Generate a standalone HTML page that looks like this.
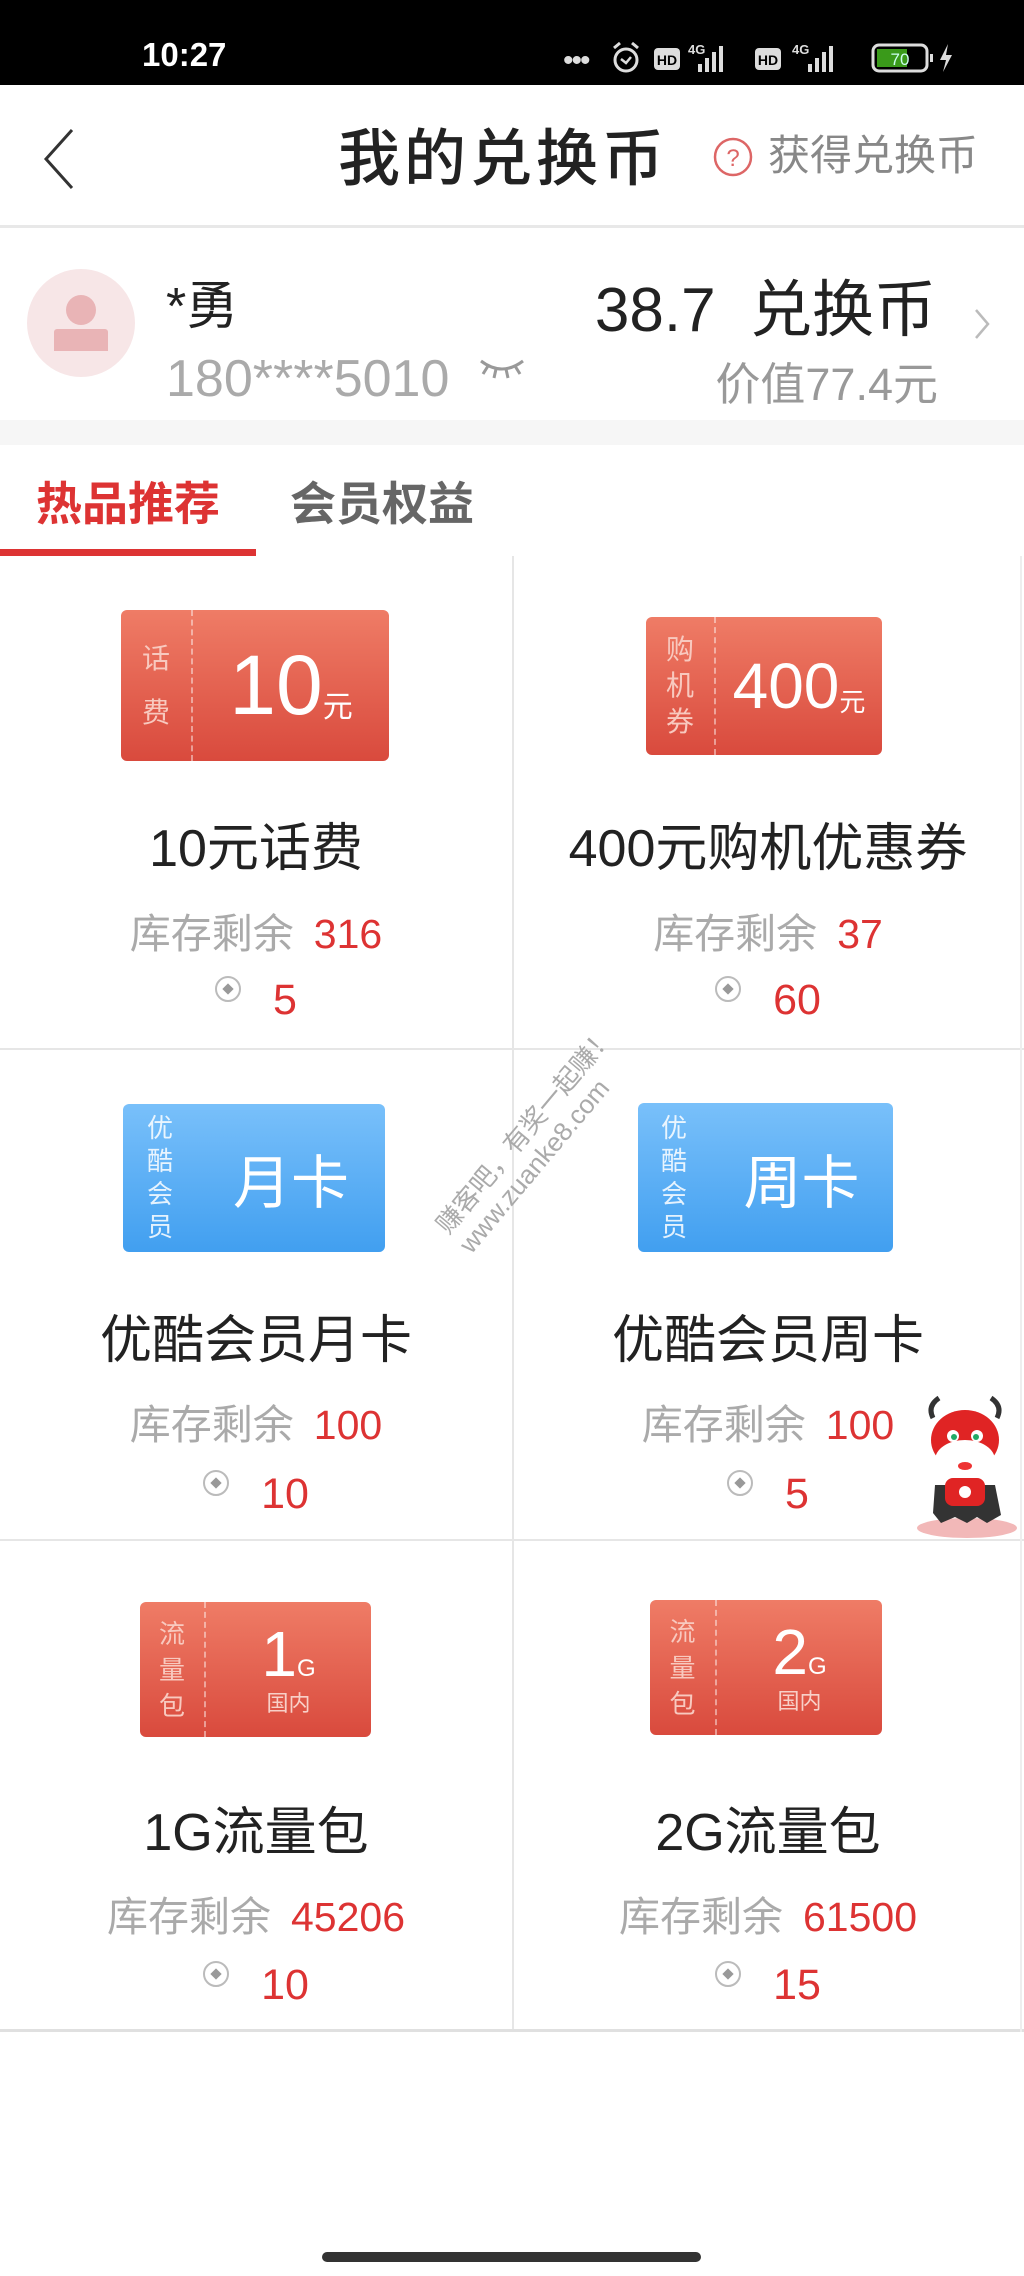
<!DOCTYPE html>
<html><head><meta charset="utf-8">
<style>
*{margin:0;padding:0;box-sizing:border-box}
body{width:1024px;height:2276px;background:#fff;position:relative;overflow:hidden;font-family:"Liberation Sans","Noto Sans CJK SC",sans-serif}
.a{position:absolute;white-space:nowrap}
.c{position:absolute;white-space:nowrap;text-align:center;width:512px}
.tk{position:absolute;border-radius:6px;overflow:hidden;color:#fff}
.red{background:linear-gradient(#ef7c66,#d94a3d)}
.blue{background:linear-gradient(#79c0fa,#419ff0)}
.stub{position:absolute;left:0;top:0;bottom:0;border-right:2px dashed rgba(255,255,255,.45);display:flex;flex-direction:column;justify-content:center;align-items:center;color:rgba(255,255,255,.85)}
.red .stub{color:#f8c9bf}
.tk .main{position:absolute;top:0;bottom:0;right:0;display:flex;align-items:center;justify-content:center}
.title{font-size:52px;color:#222}
.stock{font-size:41px;color:#aaa}
.stock b{font-weight:normal;color:#d33;margin-left:20px}
.price{font-size:43px;color:#d33}
.coin{display:inline-block;width:26px;height:26px;border:2px solid #bbb;border-radius:50%;position:relative;vertical-align:top;margin-right:32px;margin-top:0}
.coin:after{content:"";position:absolute;left:7px;top:7px;width:8px;height:8px;background:#999;transform:rotate(45deg)}
</style></head><body>
<div class="a" style="left:0;top:0;width:1024px;height:85px;background:#000"></div>
<div class="a" style="left:142px;top:36px;font-size:33px;color:#fff;font-weight:bold">10:27</div>
<div class="a" style="left:563px;top:44px;font-size:30px;color:#ddd;letter-spacing:-2px">•••</div>
<svg class="a" style="left:610px;top:40px" width="420" height="36" viewBox="0 0 420 36">
<circle cx="16" cy="20" r="11" fill="none" stroke="#ddd" stroke-width="3"/><path d="M11 19l5 4 5-6" fill="none" stroke="#ddd" stroke-width="2.5"/>
<path d="M4 8l6-5M28 8l-6-5" stroke="#ddd" stroke-width="3"/>
<rect x="44" y="8" width="26" height="22" rx="4" fill="#ddd"/><text x="57" y="25" font-size="14" font-weight="bold" text-anchor="middle" fill="#000" font-family="Liberation Sans">HD</text>
<text x="78" y="14" font-size="13" font-weight="bold" fill="#ddd" font-family="Liberation Sans">4G</text>
<rect x="88" y="24" width="4" height="8" fill="#ddd"/><rect x="95" y="18" width="4" height="14" fill="#ddd"/><rect x="102" y="12" width="4" height="20" fill="#ddd"/><rect x="109" y="6" width="4" height="26" fill="#ddd"/>
<rect x="145" y="8" width="26" height="22" rx="4" fill="#ddd"/><text x="158" y="25" font-size="14" font-weight="bold" text-anchor="middle" fill="#000" font-family="Liberation Sans">HD</text>
<text x="182" y="14" font-size="13" font-weight="bold" fill="#ddd" font-family="Liberation Sans">4G</text>
<rect x="198" y="24" width="4" height="8" fill="#ddd"/><rect x="205" y="18" width="4" height="14" fill="#ddd"/><rect x="212" y="12" width="4" height="20" fill="#ddd"/><rect x="219" y="6" width="4" height="26" fill="#ddd"/>
<rect x="263" y="5" width="54" height="26" rx="6" fill="none" stroke="#ddd" stroke-width="3"/><rect x="267" y="9" width="30" height="18" fill="#3a9a1a"/>
<text x="290" y="25" font-size="17" fill="#cfe" text-anchor="middle" font-family="Liberation Sans">70</text>
<rect x="320" y="14" width="3" height="8" fill="#ddd"/><path d="M338 4l-8 16h6l-3 12 9-17h-6z" fill="#ddd"/>
</svg>
<svg class="a" style="left:40px;top:128px" width="36" height="62"><path d="M32 2L6 31l26 29" fill="none" stroke="#333" stroke-width="3"/></svg>
<div class="a" style="left:338px;top:124px;font-size:62px;color:#222;letter-spacing:4px;line-height:72px;font-weight:500">我的兑换币</div>
<svg class="a" style="left:712px;top:136px" width="42" height="42"><circle cx="21" cy="21" r="18" fill="none" stroke="#d66" stroke-width="2.5"/><text x="21" y="30" font-size="24" text-anchor="middle" fill="#d66" font-family="Liberation Sans">?</text></svg>
<div class="a" style="left:768px;top:130px;font-size:42px;color:#888;line-height:52px">获得兑换币</div>
<div class="a" style="left:0;top:225px;width:1024px;height:3px;background:#e8e8e8"></div>
<div class="a" style="left:27px;top:269px;width:108px;height:108px;border-radius:50%;background:#f7e6e7"></div>
<div class="a" style="left:66px;top:295px;width:30px;height:30px;border-radius:50%;background:#e9b4b6"></div>
<div class="a" style="left:54px;top:329px;width:54px;height:22px;border-radius:3px 3px 0 0;background:#e9b4b6"></div>
<div class="a" style="left:166px;top:276px;font-size:52px;color:#222;line-height:62px">*勇</div>
<div class="a" style="left:166px;top:350px;font-size:52px;color:#aaa;line-height:58px">180****5010</div>
<svg class="a" style="left:478px;top:355px" width="48" height="26"><path d="M3 6q21 16 42 0M10 11l-5 8M18 14l-2 9M28 14l2 9M37 11l5 8" fill="none" stroke="#999" stroke-width="3"/></svg>
<div class="a" style="right:88px;top:276px;font-size:62px;color:#222;line-height:70px">38.7&nbsp; 兑换币</div>
<div class="a" style="right:86px;top:358px;font-size:45px;color:#999;line-height:54px">价值77.4元</div>
<svg class="a" style="left:970px;top:306px" width="24" height="36"><path d="M6 4l12 14-12 14" fill="none" stroke="#bbb" stroke-width="2.5"/></svg>
<div class="a" style="left:0;top:420px;width:1024px;height:25px;background:#f6f6f6"></div>
<div class="a" style="left:36px;top:474px;font-size:46px;color:#d33;font-weight:bold;line-height:60px">热品推荐</div>
<div class="a" style="left:290px;top:474px;font-size:46px;color:#666;font-weight:bold;line-height:60px">会员权益</div>
<div class="a" style="left:0;top:549px;width:256px;height:7px;background:#d33"></div>
<div class="a" style="left:512px;top:556px;width:2px;height:1476px;background:#e6e6e6"></div>
<div class="a" style="left:0;top:1048px;width:1024px;height:2px;background:#e6e6e6"></div>
<div class="a" style="left:0;top:1539px;width:1024px;height:2px;background:#e6e6e6"></div>
<div class="a" style="left:0;top:2029px;width:1024px;height:3px;background:#e0e0e0"></div>
<div class="a" style="left:1020px;top:556px;width:2px;height:1476px;background:#eee"></div>

<div class="tk red" style="left:121px;top:610px;width:268px;height:151px"><div class="stub" style="width:72px;font-size:28px;line-height:54px">话<br>费</div><div class="main" style="left:72px"><span style="font-size:84px;font-weight:300">10</span><span style="font-size:30px;margin-top:36px">元</span></div></div>
<div class="tk red" style="left:646px;top:617px;width:236px;height:138px"><div class="stub" style="width:70px;font-size:28px;line-height:36px">购<br>机<br>券</div><div class="main" style="left:70px"><span style="font-size:64px">400</span><span style="font-size:26px;margin-top:28px">元</span></div></div>
<div class="tk blue" style="left:123px;top:1104px;width:262px;height:148px"><div class="stub" style="width:74px;font-size:26px;line-height:33px;border-right:none">优<br>酷<br>会<br>员</div><div class="main" style="left:74px;font-size:58px">月卡</div></div>
<div class="tk blue" style="left:638px;top:1103px;width:255px;height:149px"><div class="stub" style="width:72px;font-size:26px;line-height:33px;border-right:none">优<br>酷<br>会<br>员</div><div class="main" style="left:72px;font-size:58px">周卡</div></div>
<div class="tk red" style="left:140px;top:1602px;width:231px;height:135px"><div class="stub" style="width:66px;font-size:26px;line-height:36px">流<br>量<br>包</div><div class="main" style="left:66px;flex-direction:column"><div><span style="font-size:64px;line-height:64px">1</span><span style="font-size:24px">G</span></div><div style="font-size:22px;color:#f8d0c8">国内</div></div></div>
<div class="tk red" style="left:650px;top:1600px;width:232px;height:135px"><div class="stub" style="width:67px;font-size:26px;line-height:36px">流<br>量<br>包</div><div class="main" style="left:67px;flex-direction:column"><div><span style="font-size:64px;line-height:64px">2</span><span style="font-size:24px">G</span></div><div style="font-size:22px;color:#f8d0c8">国内</div></div></div>

<div class="c title" style="left:0;top:806px">10元话费</div>
<div class="c title" style="left:512px;top:806px">400元购机优惠券</div>
<div class="c stock" style="left:0;top:900px">库存剩余<b>316</b></div>
<div class="c stock" style="left:512px;top:900px">库存剩余<b>37</b></div>
<div class="c price" style="left:0;top:976px"><i class="coin"></i>5</div>
<div class="c price" style="left:512px;top:976px"><i class="coin"></i>60</div>
<div class="c title" style="left:0;top:1298px">优酷会员月卡</div>
<div class="c title" style="left:512px;top:1298px">优酷会员周卡</div>
<div class="c stock" style="left:0;top:1391px">库存剩余<b>100</b></div>
<div class="c stock" style="left:512px;top:1391px">库存剩余<b>100</b></div>
<div class="c price" style="left:0;top:1470px"><i class="coin"></i>10</div>
<div class="c price" style="left:512px;top:1470px"><i class="coin"></i>5</div>
<div class="c title" style="left:0;top:1790px">1G流量包</div>
<div class="c title" style="left:512px;top:1790px">2G流量包</div>
<div class="c stock" style="left:0;top:1883px">库存剩余<b>45206</b></div>
<div class="c stock" style="left:512px;top:1883px">库存剩余<b>61500</b></div>
<div class="c price" style="left:0;top:1961px"><i class="coin"></i>10</div>
<div class="c price" style="left:512px;top:1961px"><i class="coin"></i>15</div>

<div class="a" style="left:430px;font-size:26px;color:#aaa;transform:rotate(-50deg);transform-origin:left top;line-height:30px;top:1220px">赚客吧，有奖一起赚！<br>www.zuanke8.com</div>
<svg class="a" style="left:905px;top:1390px" width="119" height="150" viewBox="0 0 119 150">
<ellipse cx="62" cy="138" rx="50" ry="10" fill="#f2b8b8"/>
<path d="M28 28q-6-12 6-20M92 28q6-12-6-20" stroke="#333" stroke-width="5" fill="none"/>
<ellipse cx="60" cy="50" rx="34" ry="30" fill="#e02424"/>
<ellipse cx="60" cy="70" rx="30" ry="20" fill="#fff"/>
<circle cx="48" cy="46" r="6" fill="#fff"/><circle cx="72" cy="46" r="6" fill="#fff"/>
<circle cx="49" cy="47" r="3" fill="#2a6"/><circle cx="71" cy="47" r="3" fill="#2a6"/>
<ellipse cx="60" cy="76" rx="7" ry="4" fill="#e33"/>
<path d="M30 95h60l6 30-14 8-10-6-10 6-12-6-14 6-8-10z" fill="#333"/>
<rect x="40" y="88" width="40" height="28" rx="8" fill="#e02424"/>
<circle cx="60" cy="102" r="6" fill="#fff"/>
</svg>
<div class="a" style="left:322px;top:2252px;width:379px;height:10px;border-radius:5px;background:#333"></div>
</body></html>
